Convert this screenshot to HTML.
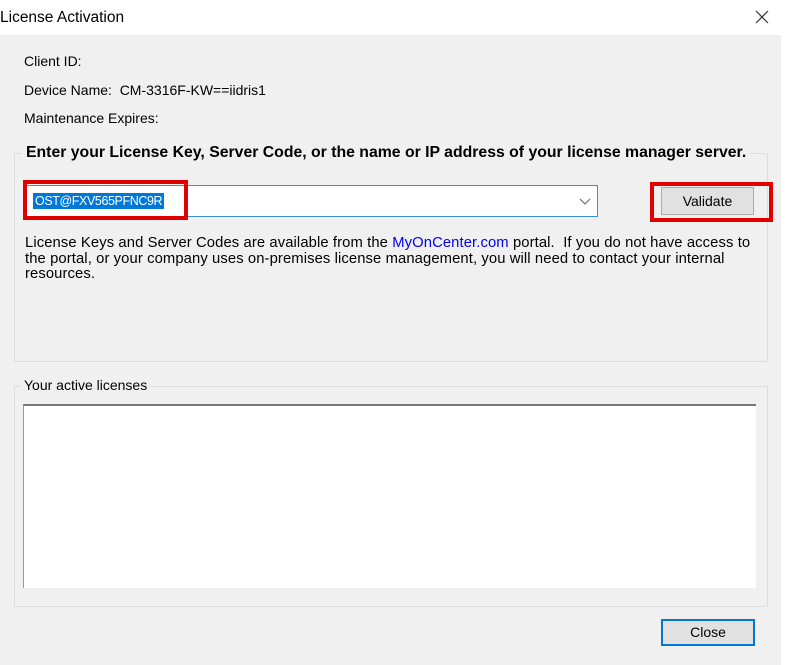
<!DOCTYPE html><html><head><style>
body{margin:0;width:786px;height:665px;position:relative;background:#fff;font-family:"Liberation Sans",sans-serif;font-size:14px;color:#000;overflow:hidden}
.a{position:absolute}
</style></head><body>
<div class="a" style="left:0;top:9px;font-size:15.5px">License Activation</div>
<svg class="a" style="left:755px;top:10px" width="14" height="14"><path d="M1 1L13 13M13 1L1 13" stroke="#333" stroke-width="1.2"/></svg>
<div class="a" style="left:0;top:35px;width:781px;height:630px;background:#f0f0f0"></div>
<div class="a" style="left:24px;top:53px">Client ID:</div>
<div class="a" style="left:24px;top:82px">Device Name:&nbsp; CM-3316F-KW==iidris1</div>
<div class="a" style="left:24px;top:110px">Maintenance Expires:</div>
<div class="a" style="left:14px;top:153px;width:752px;height:207px;border:1px solid #dcdcdc"></div>
<div class="a" style="left:22px;top:144px;background:#f0f0f0;padding:0 4px;font-weight:bold;font-size:15.8px;white-space:nowrap">Enter your License Key, Server Code, or the name or IP address of your license manager server.</div>
<div class="a" style="left:26px;top:185px;width:570px;height:30px;border:1px solid #3c8fd6;background:#fff"></div>
<div class="a" style="left:33px;top:193px;background:#0078d7;color:#fff;padding:0 2px;line-height:16px;font-size:12.5px;letter-spacing:-0.4px">OST@FXV565PFNC9R</div>
<svg class="a" style="left:579px;top:198px" width="12" height="8"><path d="M1 1L6 6L11 1" stroke="#666" fill="none"/></svg>
<div class="a" style="left:23px;top:180px;width:165px;height:40px;border:4px solid #e00000;box-sizing:border-box"></div>
<div class="a" style="left:661px;top:187px;width:93px;height:28px;background:#e1e1e1;border:1px solid #adadad;box-sizing:border-box;text-align:center;line-height:26px">Validate</div>
<div class="a" style="left:650px;top:182px;width:123px;height:40px;border:4px solid #e00000;box-sizing:border-box"></div>
<div class="a" style="left:25px;top:236px;line-height:15.5px;font-size:14.8px;letter-spacing:0.1px;white-space:nowrap">License Keys and Server Codes are available from the <span style="color:#0000ee">MyOnCenter.com</span> portal.&nbsp; If you do not have access to<br>the portal, or your company uses on-premises license management, you will need to contact your internal<br>resources.</div>
<div class="a" style="left:14px;top:386px;width:752px;height:219px;border:1px solid #dcdcdc"></div>
<div class="a" style="left:21px;top:377px;background:#f0f0f0;padding:0 3px">Your active licenses</div>
<div class="a" style="left:23px;top:404px;width:732px;height:182px;background:#fff;border-top:2px solid #777;border-left:1px solid #999"></div>
<div class="a" style="left:661px;top:619px;width:94px;height:27px;background:#e1e1e1;border:2px solid #0078d7;box-sizing:border-box;text-align:center;line-height:23px">Close</div>
</body></html>
